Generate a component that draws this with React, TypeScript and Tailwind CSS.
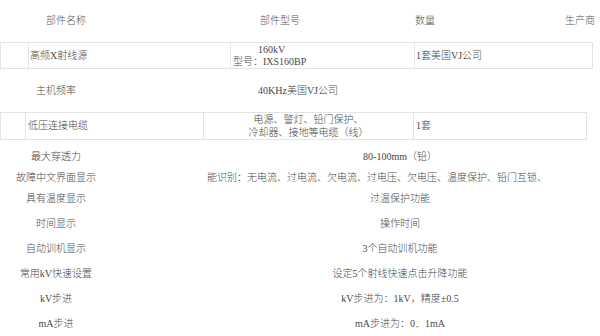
const font = {
  fontFamily: '"Liberation Serif", "Noto Sans CJK SC", serif',
};

const specs: { label: string; value: string; left?: boolean; h: string }[] = [
  { label: "最大穿透力", value: "80-100mm（铅）", h: "h-[21px]" },
  {
    label: "故障中文界面显示",
    value: "能识别：无电流、过电流、欠电流、过电压、欠电压、温度保护、铅门互锁、",
    left: true,
    h: "h-[21px]",
  },
  { label: "具有温度显示", value: "过温保护功能", h: "h-[21px]" },
  { label: "时间显示", value: "操作时间", h: "h-[25px] mt-[2px]" },
  { label: "自动训机显示", value: "3个自动训机功能", h: "h-[25px]" },
  { label: "常用kV快速设置", value: "设定5个射线快速点击升降功能", h: "h-[25px]" },
  { label: "kV步进", value: "kV步进为：1kV，精度±0.5", h: "h-[25px]" },
  { label: "mA步进", value: "mA步进为：0．1mA", h: "h-[25px]" },
];

export default function App() {
  return (
    <div
      style={font}
      className="w-[600px] h-[336px] overflow-hidden bg-white text-[10px] leading-[12px] font-light text-[#484848]"
    >
      {/* header */}
      <div className="flex items-center h-[42px] whitespace-nowrap text-[#555]">
        <div className="w-[132px] text-center">部件名称</div>
        <div className="ml-[68px] w-[160px] text-center">部件型号</div>
        <div className="ml-[55px] w-[150px]">数量</div>
        <div>生产商</div>
      </div>

      {/* table 1 */}
      <table className="border-collapse w-[593px] table-fixed">
        <tbody>
          <tr className="h-[26px]">
            <td className="w-[28px] border border-[#e4e4e4]"></td>
            <td className="w-[202px] border border-[#e4e4e4] pl-[1px]">高频X射线源</td>
            <td className="w-[184px] border border-[#e4e4e4] pl-[2px]">
              <div className="pl-[25px]">160kV</div>
              <div>型号：IXS160BP</div>
            </td>
            <td className="border border-[#e4e4e4] pl-[1px]">1套美国VJ公司</td>
          </tr>
        </tbody>
      </table>

      <div className="flex items-center h-[43px] whitespace-nowrap">
        <div className="w-[112px] text-center">主机频率</div>
        <div className="ml-[146px]">40KHz美国VJ公司</div>
      </div>

      {/* table 2 */}
      <table className="border-collapse w-[587px] table-fixed">
        <tbody>
          <tr className="h-[25px]">
            <td className="w-[25px] border border-[#e4e4e4]"></td>
            <td className="w-[178px] border border-[#e4e4e4] pl-[2px]">低压连接电缆</td>
            <td className="w-[210px] border border-[#e4e4e4] text-center leading-[13px]">
              <div>电源、警灯、铅门保护、</div>
              <div>冷却器、接地等电缆（线）</div>
            </td>
            <td className="border border-[#e4e4e4] pl-[2px]">1套</td>
          </tr>
        </tbody>
      </table>

      <div className="pt-[6px]">
        {specs.map((s) => (
          <div key={s.label} className={`flex items-center whitespace-nowrap ${s.h}`}>
            <div className="w-[112px] text-center">{s.label}</div>
            <div className={`ml-[95px] w-[386px] ${s.left ? "text-left" : "text-center"}`}>
              {s.value}
            </div>
          </div>
        ))}
      </div>
    </div>
  );
}
